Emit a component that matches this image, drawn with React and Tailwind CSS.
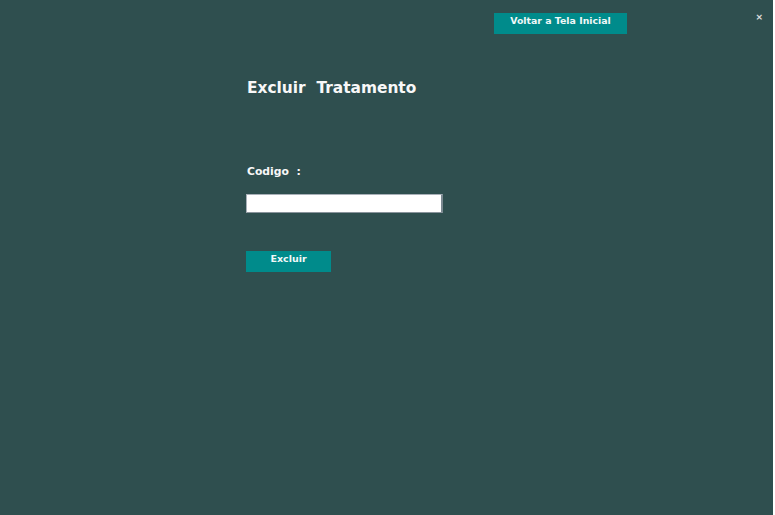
export default function App() {
  return (
    <div className="flex h-[515px] w-[775px] bg-white" style={{ fontFamily: '"DejaVu Sans", sans-serif' }}>
      <div className="flex h-[515px] w-[773px] flex-col bg-[#2f4f4f]">
        <div className="flex h-[34px] items-start pt-[13px]">
          <button className="ml-[494px] flex h-[21px] w-[133px] justify-center bg-[#008b8b] pt-[2px] text-[9.4px] font-bold leading-[12px] text-[#f0f8f8]">
            Voltar a Tela Inicial
          </button>
          <span className="ml-auto mr-[10px] mt-[-2px] text-[9px] font-bold leading-[12px] text-[#e0e0e0]">×</span>
        </div>
        <div className="flex flex-col pl-[246px]">
          <h1 className="mt-[44px] h-[20px] pl-[1px] text-[15.4px] font-bold leading-[20px] whitespace-pre text-[#f8f8f8]">
            {"Excluir  Tratamento"}
          </h1>
          <label className="mt-[67px] h-[14px] pl-[1px] text-[10.8px] font-bold leading-[14px] whitespace-pre text-[#f8f8f8]">
            {"Codigo  :"}
          </label>
          <input
            type="text"
            className="mt-[15px] h-[19px] w-[197px] border border-r-2 border-t-[#a8b0b8] border-l-[#a8b0b8] border-r-[#7a8890] border-b-[#8a949c] bg-white outline-none"
          />
          <button className="mt-[38px] flex h-[21px] w-[85px] justify-center bg-[#008b8b] pt-[2px] text-[9.5px] font-bold leading-[12px] text-[#f0f8f8]">
            Excluir
          </button>
        </div>
      </div>
    </div>
  );
}
